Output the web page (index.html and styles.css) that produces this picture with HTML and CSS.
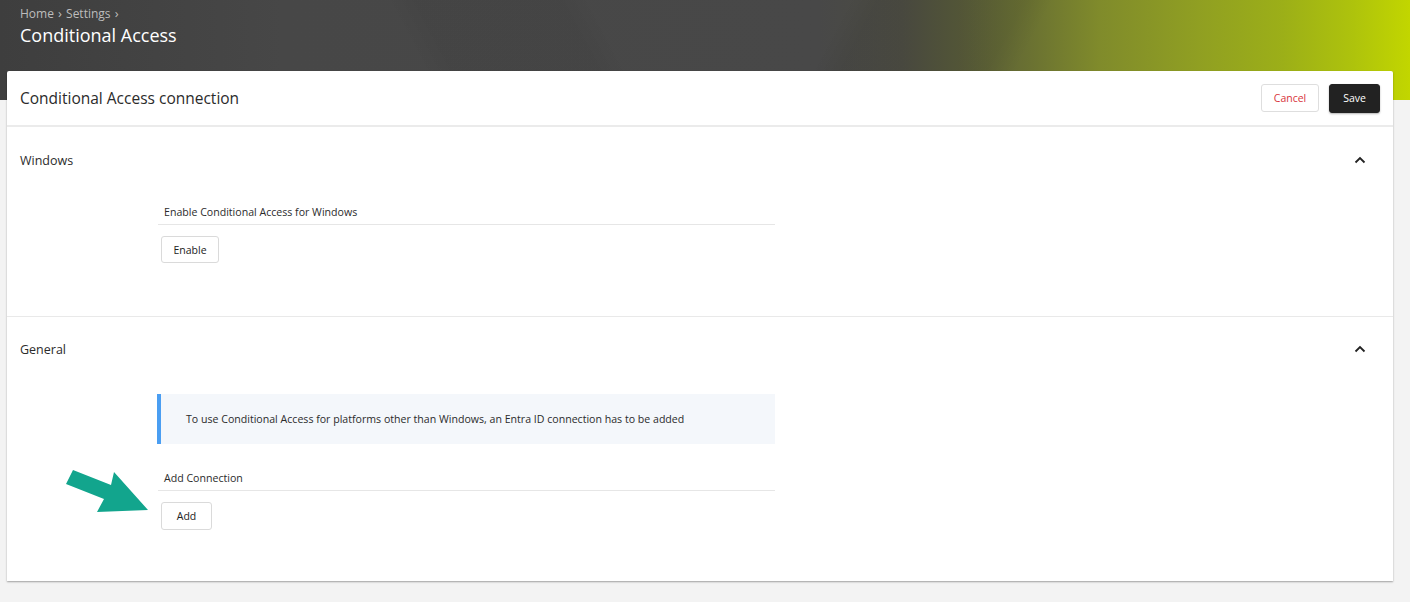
FILE: index.html
```html
<!DOCTYPE html>
<html>
<head>
<meta charset="utf-8">
<link rel="stylesheet" href="styles.css">
</head>
<body>
<header class="banner">
  <div class="crumbs">Home <span class="sep">&#8250;</span> Settings <span class="sep">&#8250;</span></div>
  <h1 class="page-title">Conditional Access</h1>
</header>
<main class="card">
  <div class="card-head">
    <h2 class="card-title">Conditional Access connection</h2>
    <div class="actions">
      <button class="btn btn-cancel">Cancel</button>
      <button class="btn btn-save">Save</button>
    </div>
  </div>
  <section class="section sec-windows">
    <div class="sec-head">
      <span>Windows</span>
      <svg class="chev" width="12" height="8" viewBox="0 0 12 8"><path d="M1.5 6.5 L6 2 L10.5 6.5" fill="none" stroke="#222" stroke-width="1.8"/></svg>
    </div>
    <div class="body">
      <div class="field f1">Enable Conditional Access for Windows</div>
      <button class="btn btn-plain b-enable">Enable</button>
    </div>
  </section>
  <section class="section sec-general">
    <div class="sec-head">
      <span>General</span>
      <svg class="chev" width="12" height="8" viewBox="0 0 12 8"><path d="M1.5 6.5 L6 2 L10.5 6.5" fill="none" stroke="#222" stroke-width="1.8"/></svg>
    </div>
    <div class="body">
      <div class="info">To use Conditional Access for platforms other than Windows, an Entra ID connection has to be added</div>
      <div class="field f2">Add Connection</div>
      <button class="btn btn-plain b-add">Add</button>
    </div>
    <svg class="arrow" width="90" height="50" viewBox="0 0 90 50"><polygon points="7,1 45,16 48,3 82,41 31,43 38,30 0,15" fill="#12a58d"/></svg>
  </section>
</main>
</body>
</html>
```
FILE: styles.css
```css
* { box-sizing: border-box; }
html, body { margin: 0; padding: 0; }
body {
  background: #f3f3f3;
  font-family: "Open Sans", "Noto Sans", sans-serif;
  color: #2a2a2a;
  height: 602px;
  overflow: hidden;
}
.banner {
  height: 100px;
  padding: 5px 20px 0;
  background:
    linear-gradient(118deg, rgba(0,0,0,0) 0%, rgba(0,0,0,0) 58%, rgba(0,0,0,0.05) 60%, rgba(0,0,0,0.05) 70%, rgba(0,0,0,0) 72%),
    linear-gradient(62deg, rgba(0,0,0,0) 0%, rgba(0,0,0,0) 30%, rgba(0,0,0,0.04) 32%, rgba(0,0,0,0.04) 42%, rgba(0,0,0,0) 44%),
    linear-gradient(90deg, #3e3e3e 0%, #474747 20%, #484848 58%, #4c4c42 64%, #56593a 68%, #6a7132 73%, #808b2b 78%, #909f22 85%, #9caf18 91%, #aec30c 96%, #c2d600 100%);
  color: #fff;
}
.crumbs {
  font-size: 12px;
  line-height: 16px;
  color: #bdbdbd;
}
.crumbs .sep { margin: 0 1px; font-size: 13px; }
.page-title {
  margin: 0;
  font-size: 18px;
  font-weight: 400;
  line-height: 26px;
  color: #fff;
}
.card {
  position: relative;
  margin: -29px 17px 0 7px;
  background: #fff;
  box-shadow: 0 1px 2px rgba(0,0,0,0.35);
  border-radius: 2px 2px 0 0;
}
.card-head {
  height: 56px;
  padding: 0 13px;
  display: flex;
  align-items: center;
  justify-content: space-between;
  border-bottom: 2px solid #ebebeb;
}
.card-title {
  margin: 0;
  font-size: 15.5px;
  font-weight: 400;
  color: #2b2b2b;
}
.actions { display: flex; gap: 10px; align-items: center; }
.btn {
  font-family: "Open Sans", "Noto Sans", sans-serif;
  font-size: 10.5px;
  height: 28px;
  border-radius: 3px;
  cursor: pointer;
  padding: 0;
}
.btn-cancel {
  width: 58px;
  background: #fff;
  border: 1px solid #dedede;
  color: #d8343c;
}
.btn-save {
  width: 51px;
  height: 29px;
  background: #222;
  border: 1px solid #222;
  color: #fff;
  box-shadow: 0 1px 2px rgba(0,0,0,0.3);
}
.section { padding: 0 13px; position: relative; }
.sec-windows { padding-top: 23px; padding-bottom: 53px; border-bottom: 1px solid #e9e9e9; }
.sec-general { padding-top: 22px; padding-bottom: 51px; }
.sec-head {
  display: flex;
  align-items: center;
  justify-content: space-between;
  height: 20px;
  font-size: 12.5px;
  color: #2b2b2b;
  padding-right: 14px;
}
.body { margin-left: 138px; width: 617px; }
.field {
  font-size: 10.6px;
  line-height: 16px;
  padding: 4px 6px;
  border-bottom: 1px solid #e6e6e6;
  color: #2b2b2b;
}
.f1 { margin-top: 30px; }
.f2 { margin-top: 22px; }
.btn-plain {
  display: block;
  margin: 11px 0 0 3px;
  background: #fff;
  border: 1px solid #dadada;
  color: #222;
}
.b-enable { width: 58px; height: 27px; }
.b-add { width: 51px; }
.info {
  margin-top: 35px;
  height: 50px;
  margin-left: -1px;
  display: flex;
  align-items: center;
  padding-left: 25px;
  background: #f4f7fb;
  border-left: 4px solid #4a9ef2;
  font-size: 10.6px;
  color: #2b2b2b;
}
.arrow {
  position: absolute;
  left: 59px;
  top: 152px;
}
```
